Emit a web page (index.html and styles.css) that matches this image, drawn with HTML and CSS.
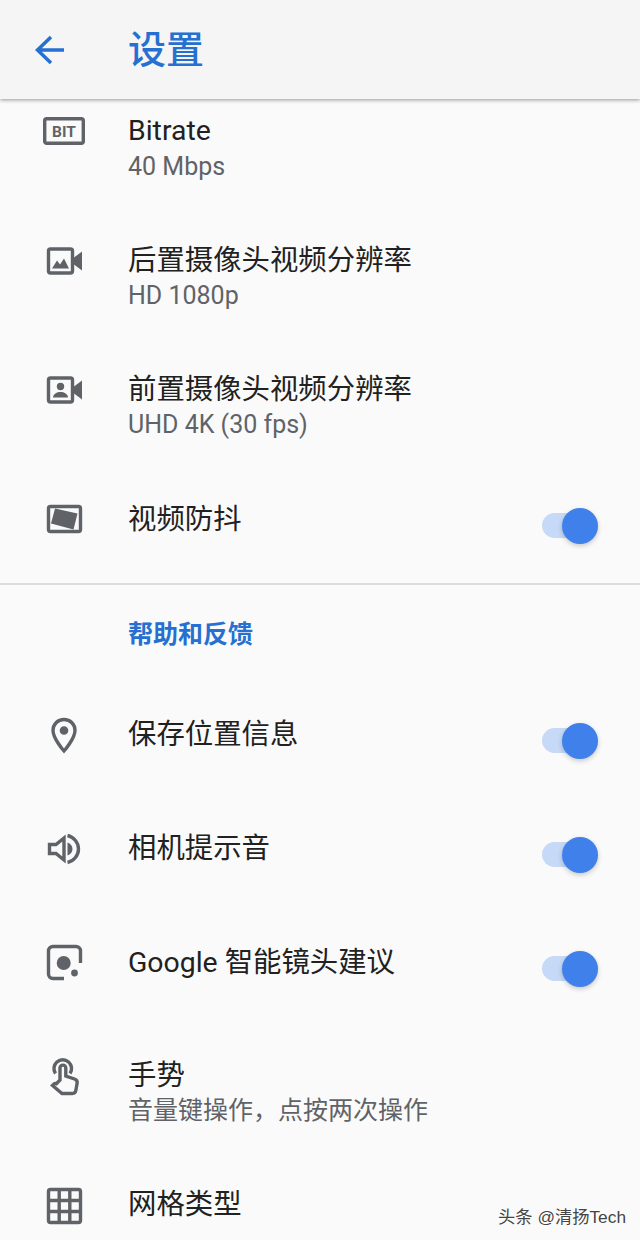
FILE: index.html
```html
<!DOCTYPE html>
<html>
	<head>
		<meta charset="utf-8">
		<title>设置</title>
		<link rel="stylesheet" href="styles.css">
	</head>
	<body>
		<div class="page">
			<div class="header">
				<svg class="back" viewBox="0 0 48 48"><path d="M38 24H12.5M25 11 11.5 24 25 37"/></svg>
				<h1>设置</h1>
			</div>

			<div class="list first">
				<div class="row">
					<svg class="icon" viewBox="0 0 48 48">
						<rect class="line" x="4.700" y="11.700" width="38.600" height="24.600" rx="2"/>
						<text x="24" y="29.500" text-anchor="middle">BIT</text>
					</svg>
					<div class="text"><div class="title">Bitrate</div><div class="sub">40 Mbps</div></div>
				</div>
				<div class="row">
					<svg class="icon" viewBox="0 0 48 48">
						<rect class="line" x="8.500" y="13" width="24" height="24" rx="2"/>
						<path d="M34 21.500 42 15.500V34.500L34 28.500ZM12 32.500 17 24.500 20 28.500 24 22.500 29 32.500Z"/>
					</svg>
					<div class="text"><div class="title cn">后置摄像头视频分辨率</div><div class="sub">HD 1080p</div></div>
				</div>
				<div class="row">
					<svg class="icon" viewBox="0 0 48 48">
						<rect class="line" x="8.500" y="13" width="24" height="24" rx="2"/>
						<path d="M34 21.500 42 15.500V34.500L34 28.500Z"/>
						<circle cx="20.500" cy="21.500" r="3.700"/>
						<path d="M13 32.500c0-3.500 4-5.500 7.500-5.500S28 29 28 32.500Z"/>
					</svg>
					<div class="text"><div class="title cn">前置摄像头视频分辨率</div><div class="sub">UHD 4K (30 fps)</div></div>
				</div>
				<div class="row shifted">
					<svg class="icon" viewBox="0 0 48 48">
						<rect class="line" x="8.500" y="11.500" width="32" height="25" rx="2"/>
						<path d="M15 13.500 37.500 18.500 33.500 34.500 11 28.500Z"/>
					</svg>
					<div class="text"><div class="title cn">视频防抖</div></div>
					<div class="switch"></div>
				</div>
			</div>

			<div class="divider"></div>
			<div class="section">帮助和反馈</div>

			<div class="list second">
				<div class="row single">
					<svg class="icon" viewBox="0 0 48 48">
						<path class="line" d="M24 9.500c-6.500 0-11 5-11 11 0 8 11 20.500 11 20.500s11-12.500 11-20.500c0-6-4.500-11-11-11Z"/>
						<circle cx="24" cy="20.500" r="4.300"/>
					</svg>
					<div class="text"><div class="title cn">保存位置信息</div></div>
					<div class="switch"></div>
				</div>
				<div class="row single">
					<svg class="icon" viewBox="0 0 48 48">
						<path class="line" d="M9.500 20.500H16L24 14V36L16 29.500H9.500Z"/>
						<path d="M27.500 18.500c3 .8 5 3.400 5 6.500s-2 5.700-5 6.500Z"/>
						<path class="line" d="M27.500 11.500c6 1.300 11 6.800 11 13.500s-5 12.200-11 13.500"/>
					</svg>
					<div class="text"><div class="title cn">相机提示音</div></div>
					<div class="switch"></div>
				</div>
				<div class="row single tight">
					<svg class="icon" viewBox="0 0 48 48">
						<path class="line" d="M24 40.500H13c-2.500 0-4.500-2-4.500-4.500V13c0-2.500 2-4.500 4.500-4.500h23c2.500 0 4.500 2 4.500 4.500v12"/>
						<circle cx="23.700" cy="25" r="7"/>
						<circle cx="34.500" cy="35" r="3.400"/>
					</svg>
					<div class="text"><div class="title cn">Google 智能镜头建议</div></div>
					<div class="switch"></div>
				</div>
				<div class="row">
					<svg class="icon" viewBox="0 0 48 48">
						<path class="line" d="M15.500 22.500a8.800 8.800 0 1 1 14.500 0"/>
						<path class="line" d="M20 29V17a2.900 2.900 0 0 1 5.800 0v8l8.700 3c2 .7 3 2.300 2.600 4.300l-1.300 7.200c-.3 1.700-1.600 3-3.300 3H22L12.500 34.500l1.300-1.300c.7-.7 1.700-.9 2.600-.5Z"/>
					</svg>
					<div class="text"><div class="title cn">手势</div><div class="sub">音量键操作，点按两次操作</div></div>
				</div>
				<div class="row">
					<svg class="icon" viewBox="0 0 48 48">
						<rect class="line" x="8.500" y="9.500" width="32" height="33" rx="2"/>
						<path class="line" d="M19.200 9.500v33M29.800 9.500v33M8.500 20.500h32M8.500 31.500h32"/>
					</svg>
					<div class="text"><div class="title cn">网格类型</div></div>
				</div>
			</div>

			<div class="mark">头条 @清扬Tech</div>
		</div>
	</body>
</html>
```

FILE: styles.css
```css
*{margin: 0;padding: 0;box-sizing: border-box;}
body{
	background: #fafafa;
	font-family: Roboto, "Noto Sans CJK SC", sans-serif;
}
.page{
	width: 640px;
	height: 1240px;
	position: relative;
	overflow: hidden;
	background: #fafafa;
}
.header{
	height: 99px;
	display: flex;
	align-items: center;
	gap: 54px;
	padding-left: 26px;
	background: #f5f5f5;
	box-shadow: 0 1px 4px rgba(0,0,0,0.4);
	position: relative;
}
.header h1{
	font-size: 38px;
	line-height: 48px;
	font-weight: 500;
	color: #2570d0;
}
.back{
	width: 48px;
	height: 48px;
	fill: none;
	stroke: #2570d0;
	stroke-width: 3.5;
}
.list{
	display: flex;
	flex-direction: column;
	gap: 57px;
	padding-right: 42px;
}
.list.first{
	padding-top: 14px;
}
.row{
	display: flex;
	align-items: flex-start;
	padding-left: 40px;
}
.row.shifted{
	margin-top: 1px;
}
.row.single{
	margin-bottom: 21px;
}
.row.tight{
	margin-bottom: 20px;
}
.icon{
	width: 48px;
	height: 48px;
	margin: -6px 40px -6px 0;
	flex: none;
	fill: #5f6368;
}
.icon .line{
	fill: none;
	stroke: #5f6368;
	stroke-width: 3.400;
}
.icon text{
	font-family: Roboto, sans-serif;
	font-size: 15.5px;
	font-weight: 700;
}
.text{
	flex: 1;
}
.title{
	font-size: 28.4px;
	line-height: 36px;
	color: #212121;
}
.title.cn{
	line-height: 38px;
	margin-bottom: -2px;
}
.sub{
	font-size: 25px;
	line-height: 36px;
	color: #5f6368;
}
.switch{
	width: 56px;
	height: 25px;
	margin-top: 12px;
	margin-bottom: -1px;
	border-radius: 13px;
	background: #c6d9f7;
	position: relative;
}
.switch::after{
	content: "";
	position: absolute;
	right: 0;
	top: -5px;
	width: 36px;
	height: 36px;
	border-radius: 50%;
	background: #4080ea;
	box-shadow: 0 2px 5px rgba(0,0,0,0.2);
}
.divider{
	height: 2px;
	margin-top: 46px;
	background: #dcdcdc;
}
.section{
	padding: 34px 0 65px 128px;
	font-size: 25px;
	line-height: 32px;
	font-weight: 700;
	color: #2570d0;
}
.mark{
	position: absolute;
	right: 14px;
	bottom: 11px;
	font-family: "Liberation Sans", "Noto Sans CJK SC", sans-serif;
	font-size: 17.3px;
	line-height: 24px;
	color: #444;
	text-shadow: 0 0 2px #fff, 0 0 2px #fff;
}
```
